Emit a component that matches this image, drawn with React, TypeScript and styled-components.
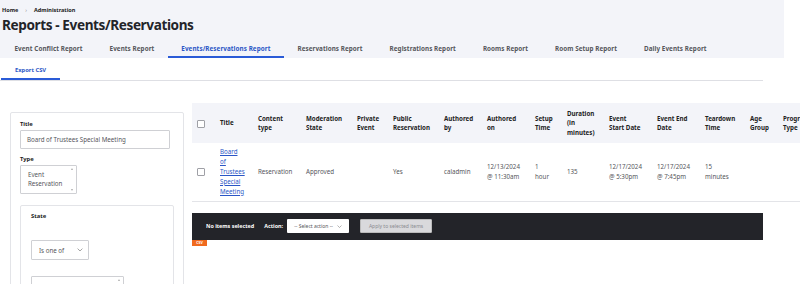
import React from "react";
import styled, { createGlobalStyle } from "styled-components";

const Global = createGlobalStyle`
  html, body { margin: 0; padding: 0; background: #fff; overflow: hidden; }
  body { font-family: "Noto Sans", "Open Sans", sans-serif; color: #333; }
  * { box-sizing: border-box; }
`;

const Page = styled.div`
  width: 800px;
  height: 284px;
  overflow: hidden;
`;

const Header = styled.header`
  width: 784px;
  background: #f3f4f9;
  padding: 6px 0 0 0;
`;

const Breadcrumb = styled.nav`
  display: flex;
  align-items: center;
  gap: 7px;
  padding-left: 2px;
  font-size: 5.5px;
  font-weight: 700;
  color: #222;
  height: 8px;
`;

const Sep = styled.span`
  color: #888;
  font-weight: 400;
`;

const Title = styled.h1`
  margin: 1px 0 0 2px;
  font-size: 13.6px;
  letter-spacing: -0.4px;
  line-height: 19px;
  font-weight: 700;
  color: #232429;
`;

const TabBar = styled.nav`
  display: flex;
  margin-top: 5px;
  padding-left: 1px;
`;

const Tab = styled.a<{ $active?: boolean }>`
  display: block;
  padding: 0 13.5px;
  height: 19px;
  line-height: 19px;
  font-size: 6.3px;
  letter-spacing: 0.07px;
  font-weight: 700;
  white-space: nowrap;
  color: ${(p) => (p.$active ? "#2a56c6" : "#55565b")};
  border-bottom: 2px solid ${(p) => (p.$active ? "#2a5bd7" : "transparent")};
`;

const SubTabs = styled.nav`
  width: 763px;
  display: flex;
  border-bottom: 1px solid #dedfe4;
  padding-top: 3px;
`;

const SubTab = styled.a<{ $active?: boolean }>`
  display: block;
  margin-left: 1px;
  width: 59px;
  text-align: center;
  height: 19px;
  line-height: 19px;
  font-size: 5.8px;
  font-weight: 700;
  color: #2a56c6;
  border-bottom: 2px solid ${(p) => (p.$active ? "#2a5bd7" : "transparent")};
`;

const Main = styled.div`
  display: flex;
  align-items: flex-start;
`;

const Sidebar = styled.aside`
  margin: 31px 0 0 10px;
  width: 174px;
  height: 220px;
  border: 1px solid #e3e4e8;
  border-radius: 2px;
  padding: 7px 0 0 9px;
  flex-shrink: 0;
`;

const Label = styled.div<{ $mt?: number }>`
  margin-top: ${(p) => p.$mt ?? 0}px;
  font-size: 5.8px;
  font-weight: 700;
  color: #222;
  line-height: 8px;
`;

const TextInput = styled.div`
  margin-top: 2px;
  width: 150px;
  height: 19px;
  border: 1px solid #cfd0d4;
  border-radius: 1px;
  padding-left: 6px;
  font-size: 6.2px;
  line-height: 17px;
  color: #55565b;
`;

const MultiSelect = styled.div<{ $w: number; $h: number; $mt?: number }>`
  position: relative;
  margin-top: ${(p) => p.$mt ?? 2}px;
  width: ${(p) => p.$w}px;
  height: ${(p) => p.$h}px;
  border: 1px solid #cfd0d4;
  border-radius: 1px;
  padding: 4px 0 0 7px;
  font-size: 6.2px;
  line-height: 9px;
  color: #55565b;
`;

const ScrollBar = styled.div`
  position: absolute;
  top: 2px;
  right: 1px;
  bottom: 2px;
  width: 6px;
  display: flex;
  flex-direction: column;
  justify-content: space-between;
  align-items: center;
`;

const Arrow = styled.span<{ $up?: boolean }>`
  width: 0;
  height: 0;
  border-left: 1.5px solid transparent;
  border-right: 1.5px solid transparent;
  ${(p) => (p.$up ? "border-bottom: 2px solid #aaa;" : "border-top: 2px solid #aaa;")}
`;

const Fieldset = styled.div`
  margin-top: 11px;
  width: 154px;
  height: 140px;
  border: 1px solid #e3e4e8;
  border-radius: 2px;
  padding: 6px 0 0 10px;
`;

const Dropdown = styled.div`
  margin-top: 20px;
  width: 58px;
  height: 20px;
  border: 1px solid #cfd0d4;
  border-radius: 1px;
  display: flex;
  align-items: center;
  justify-content: space-between;
  padding: 0 5px 0 7px;
  font-size: 6.2px;
  color: #55565b;
`;

const Content = styled.div`
  margin: 22px 0 0 8px;
  flex: 1;
  min-width: 0;
`;

const Table = styled.table`
  border-collapse: collapse;
  table-layout: fixed;
  width: 640px;
  font-size: 6.2px;
  color: #55565b;
`;

const HeadRow = styled.tr`
  background: #f3f4f9;
  height: 40px;
`;

const Th = styled.th`
  text-align: left;
  vertical-align: middle;
  font-weight: 700;
  color: #222;
  padding: 0 0 0 5px;
  line-height: 9.5px;
  font-size: 6.2px;
`;

const BodyRow = styled.tr`
  height: 58px;
  border-bottom: 1px solid #e3e4e8;
`;

const Td = styled.td`
  vertical-align: middle;
  padding: 0 0 0 5px;
  line-height: 10px;
`;

const Check = styled.span`
  display: inline-block;
  width: 8px;
  height: 8px;
  border: 1px solid #9fa0a6;
  border-radius: 1px;
  background: #fff;
  vertical-align: middle;
`;

const Link = styled.a`
  color: #2a56c6;
  text-decoration: underline;
  display: block;
  width: min-content;
`;

const ActionBar = styled.div`
  margin-top: 11px;
  width: 571px;
  height: 27px;
  background: #232429;
  display: flex;
  align-items: center;
  padding-left: 14px;
  font-size: 5.4px;
  font-weight: 700;
  color: #fff;
`;

const ActionLabel = styled.span<{ $ml?: number }>`
  margin-left: ${(p) => p.$ml ?? 0}px;
`;

const SelectBox = styled.div`
  margin-left: 4px;
  width: 62px;
  height: 14px;
  background: #fff;
  border-radius: 1px;
  display: flex;
  align-items: center;
  justify-content: center;
  gap: 4px;
  font-weight: 400;
  color: #55565b;
  font-size: 5px;
`;

const ApplyButton = styled.div`
  margin-left: 11px;
  width: 72px;
  height: 14px;
  background: #d9d9dc;
  border: 1px solid #bbb;
  border-radius: 1px;
  display: flex;
  align-items: center;
  justify-content: center;
  font-weight: 400;
  color: #8a8b90;
  font-size: 5px;
`;

const Badge = styled.div`
  width: 15px;
  height: 6px;
  background: #f06a1e;
  color: #fff;
  font-size: 3.5px;
  font-weight: 700;
  line-height: 6px;
  text-align: center;
`;

const Chevron = ({ size = 6 }: { size?: number }) => (
  <svg width={size} height={size * 0.6} viewBox="0 0 10 6" fill="none">
    <path d="M1 1l4 4 4-4" stroke="#666" strokeWidth="1" />
  </svg>
);

const cols = [23, 38, 48, 51, 36, 51, 43, 48, 32, 42, 48, 48, 45, 33, 60];

const heads: React.ReactNode[] = [
  <Check key="c" />,
  "Title",
  <>Content<br />type</>,
  <>Moderation<br />State</>,
  <>Private<br />Event</>,
  <>Public<br />Reservation</>,
  <>Authored<br />by</>,
  <>Authored<br />on</>,
  <>Setup<br />Time</>,
  <>Duration<br />(in<br />minutes)</>,
  <>Event<br />Start Date</>,
  <>Event End<br />Date</>,
  <>Teardown<br />Time</>,
  <>Age<br />Group</>,
  <>Program<br />Type</>,
];

const tabs = [
  "Event Conflict Report",
  "Events Report",
  "Events/Reservations Report",
  "Reservations Report",
  "Registrations Report",
  "Rooms Report",
  "Room Setup Report",
  "Daily Events Report",
];

export default function App() {
  return (
    <Page>
      <Global />
      <Header>
        <Breadcrumb>
          <span>Home</span>
          <Sep>›</Sep>
          <span>Administration</span>
        </Breadcrumb>
        <Title>Reports - Events/Reservations</Title>
        <TabBar>
          {tabs.map((t) => (
            <Tab key={t} $active={t === "Events/Reservations Report"}>
              {t}
            </Tab>
          ))}
        </TabBar>
      </Header>
      <SubTabs>
        <SubTab $active>Export CSV</SubTab>
      </SubTabs>
      <Main>
        <Sidebar>
          <Label>Title</Label>
          <TextInput>Board of Trustees Special Meeting</TextInput>
          <Label $mt={6}>Type</Label>
          <MultiSelect $w={57} $h={29}>
            Event
            <br />
            Reservation
            <ScrollBar>
              <Arrow $up />
              <Arrow />
            </ScrollBar>
          </MultiSelect>
          <Fieldset>
            <Label>State</Label>
            <Dropdown>
              Is one of
              <Chevron />
            </Dropdown>
            <MultiSelect $w={93} $h={30} $mt={16}>
              <ScrollBar>
                <Arrow $up />
                <Arrow />
              </ScrollBar>
            </MultiSelect>
          </Fieldset>
        </Sidebar>
        <Content>
          <Table>
            <colgroup>
              {cols.map((w, i) => (
                <col key={i} style={{ width: w }} />
              ))}
            </colgroup>
            <thead>
              <HeadRow>
                {heads.map((h, i) => (
                  <Th key={i}>{h}</Th>
                ))}
              </HeadRow>
            </thead>
            <tbody>
              <BodyRow>
                <Td>
                  <Check />
                </Td>
                <Td>
                  <Link>Board of Trustees Special Meeting</Link>
                </Td>
                <Td>Reservation</Td>
                <Td>Approved</Td>
                <Td></Td>
                <Td>Yes</Td>
                <Td>caladmin</Td>
                <Td>
                  12/13/2024
                  <br />@ 11:30am
                </Td>
                <Td>
                  1<br />
                  hour
                </Td>
                <Td>135</Td>
                <Td>
                  12/17/2024
                  <br />@ 5:30pm
                </Td>
                <Td>
                  12/17/2024
                  <br />@ 7:45pm
                </Td>
                <Td>
                  15
                  <br />
                  minutes
                </Td>
                <Td></Td>
                <Td></Td>
              </BodyRow>
            </tbody>
          </Table>
          <ActionBar>
            <span>No items selected</span>
            <ActionLabel $ml={10}>Action:</ActionLabel>
            <SelectBox>
              -- Select action --
              <Chevron size={5} />
            </SelectBox>
            <ApplyButton>Apply to selected items</ApplyButton>
          </ActionBar>
          <Badge>CSV</Badge>
        </Content>
      </Main>
    </Page>
  );
}
